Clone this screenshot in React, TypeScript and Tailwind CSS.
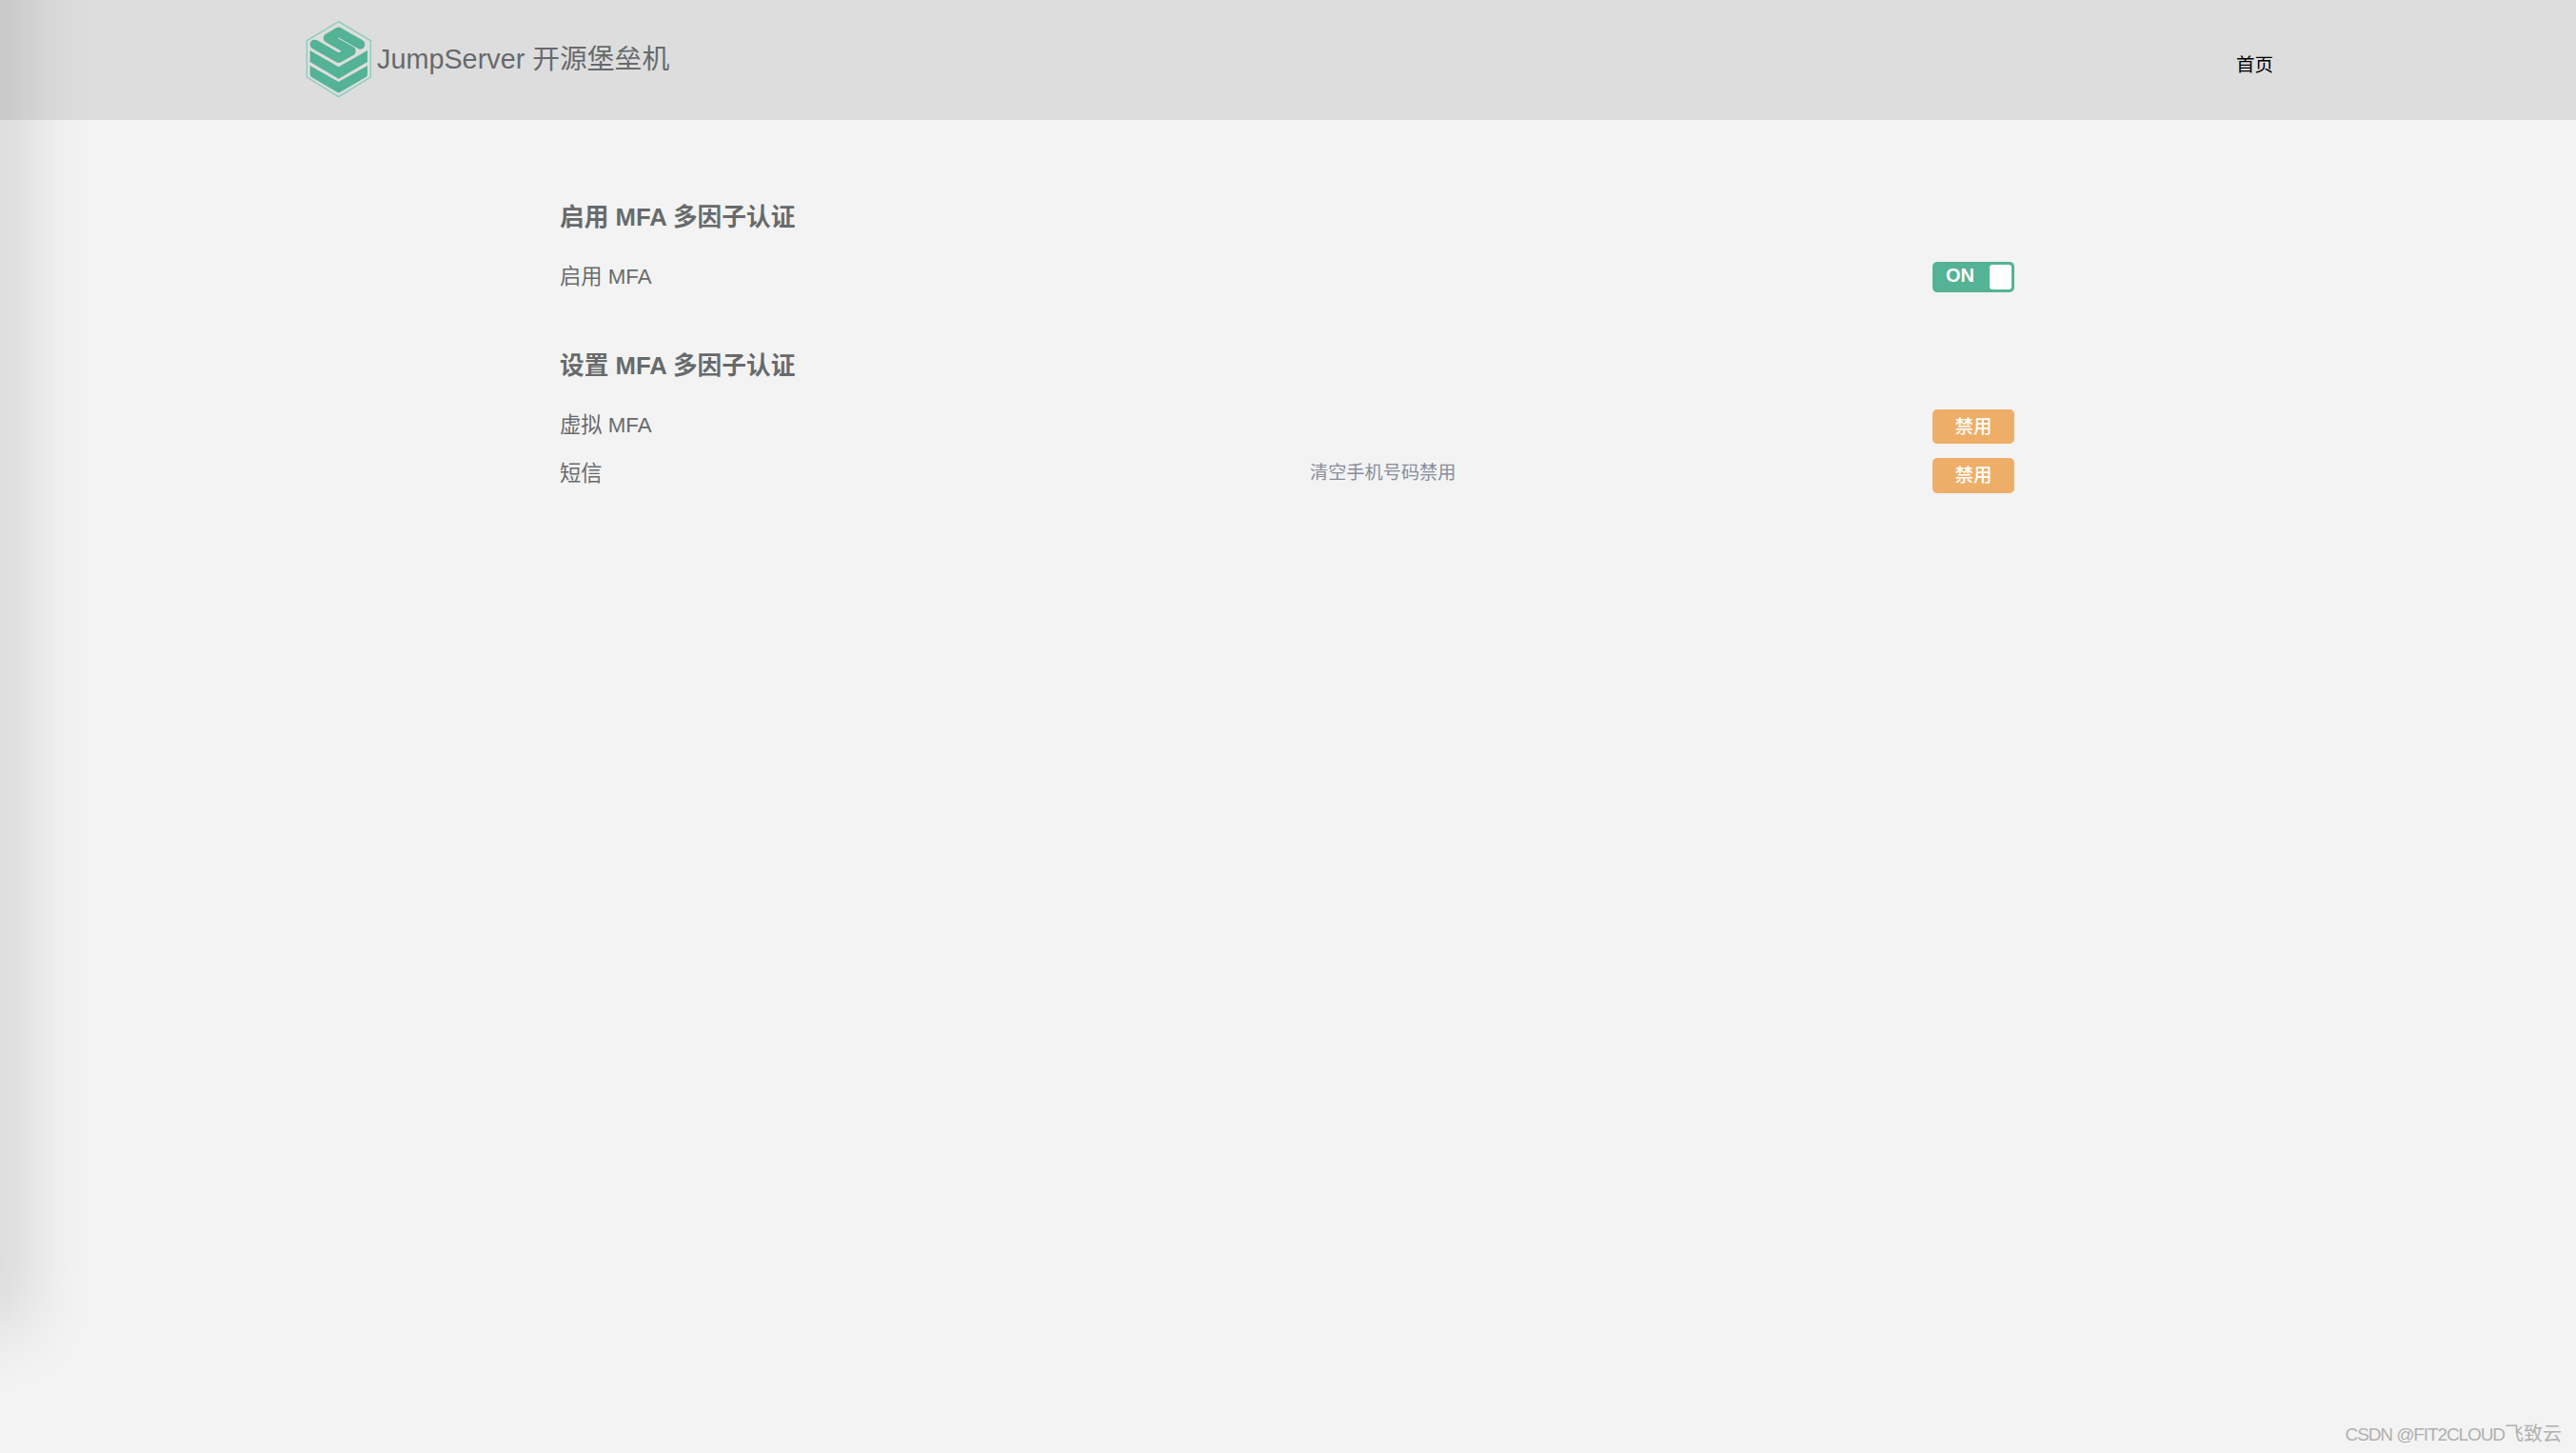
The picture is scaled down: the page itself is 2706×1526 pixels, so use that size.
const fontStack = '[font-family:"Liberation_Sans","Noto_Sans_CJK_SC",sans-serif]';

// Logo: hexagone + S isometrique + deux chevrons
function Logo() {
  return (
    <svg width="72" height="84" viewBox="33 20 216 252" className="shrink-0">
      <path d="M137 25 L238 85 L238 200 L137 262 L37 200 L37 85 Z" fill="none" stroke="#85cdbb" strokeWidth="4" />
      <path
        d="M47 164 L137 215 L228 164 L228 192 Q228 197 223 200 L142 247 Q137 250 132 247 L52 200 Q47 197 47 192 Z"
        fill="#54b295"
      />
      <path d="M47 116 L137 168 L228 116 L228 152 L137 205 L47 152 Z" fill="#54b295" />
      <path
        d="M205 97 L137 58 L104 77 L176 118 L137 140 L62 97"
        fill="none"
        stroke="#54b295"
        strokeWidth="30"
        strokeLinecap="round"
        strokeLinejoin="round"
      />
    </svg>
  );
}

function DisableButton() {
  return (
    <button className="flex h-full w-[86px] items-center justify-center rounded-[5px] bg-[#eeae68] text-[19.5px] font-medium text-white">
      禁用
    </button>
  );
}

export default function App() {
  return (
    <div className={`relative flex h-[1526px] flex-col overflow-hidden bg-[#f3f3f3] ${fontStack}`}>
      {/* Ombre floue sur le bord gauche */}
      <div className="absolute top-[-100px] left-[-40px] h-[1470px] w-[40px] shadow-[0_0_75px_27px_rgba(0,0,0,0.12)]"></div>

      <header className="flex h-[126px] shrink-0 items-center justify-between bg-[#dddddd] pr-[318px] pl-[321px]">
        <div className="flex items-center gap-[3px]">
          <Logo />
          <span className="text-[28.8px] text-[#676a6c]">JumpServer 开源堡垒机</span>
        </div>
        <a className="mt-[12px] text-[19.5px] text-black">首页</a>
      </header>

      <main className="ml-[588px] w-[1528px] pt-[84px] text-[#676a6c]">
        <h2 className="flex h-[36px] items-center text-[25.7px] font-bold">启用 MFA 多因子认证</h2>
        <div className="mt-[28px] grid h-[32px] grid-cols-[788px_1fr_86px] items-center">
          <span className="text-[22.3px]">启用 MFA</span>
          <span></span>
          <div className="flex h-[32px] items-center justify-between rounded-[5px] bg-[#54b295] pr-[3px] pl-[14px]">
            <span className="mb-[3px] text-[20px] font-bold text-white">ON</span>
            <span className="h-[26px] w-[23px] rounded-[3px] bg-white"></span>
          </div>
        </div>

        <h2 className="mt-[59px] flex h-[36px] items-center pt-[3px] text-[25.7px] font-bold">设置 MFA 多因子认证</h2>
        <div className="mt-[29px] grid h-[35px] grid-cols-[788px_1fr_86px] items-center">
          <span className="mb-[3px] text-[22.3px]">虚拟 MFA</span>
          <span></span>
          <DisableButton />
        </div>
        <div className="mt-[16px] grid h-[36px] grid-cols-[788px_1fr_86px] items-center">
          <span className="mb-[4px] text-[22.3px]">短信</span>
          <span className="mb-[4px] text-[19.2px] text-[#888c9b]">清空手机号码禁用</span>
          <DisableButton />
        </div>
      </main>

      <footer className="mt-auto flex items-baseline justify-end pr-[15px] pb-[7px] text-[20px] leading-[24px] text-[#b0b0b0]">
        <span className="text-[19px] tracking-[-1.1px]">CSDN @FIT2CLOUD</span>
        <span>飞致云</span>
      </footer>
    </div>
  );
}
